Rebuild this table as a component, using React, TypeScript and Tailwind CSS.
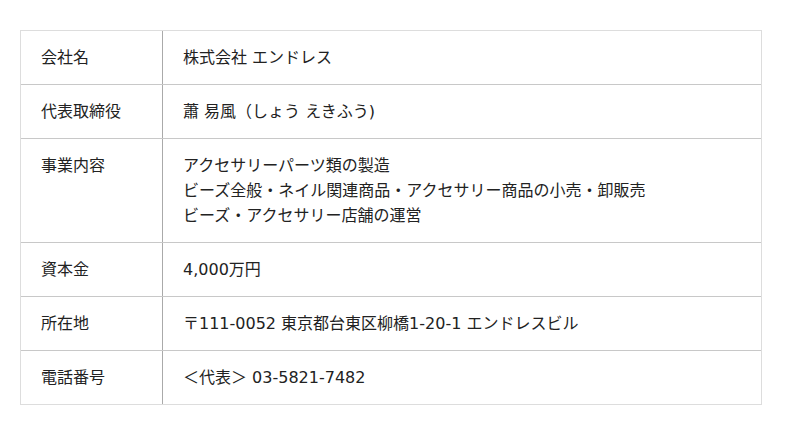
import React from 'react';

const rows: { label: string; lines: string[] }[] = [
  { label: '会社名', lines: ['株式会社 エンドレス'] },
  { label: '代表取締役', lines: ['蕭 易風（しょう えきふう)'] },
  {
    label: '事業内容',
    lines: [
      'アクセサリーパーツ類の製造',
      'ビーズ全般・ネイル関連商品・アクセサリー商品の小売・卸販売',
      'ビーズ・アクセサリー店舗の運営',
    ],
  },
  { label: '資本金', lines: ['4,000万円'] },
  { label: '所在地', lines: ['〒111-0052 東京都台東区柳橋1-20-1 エンドレスビル'] },
  { label: '電話番号', lines: ['＜代表＞ 03-5821-7482'] },
];

const App: React.FC = () => {
  return (
    <div className="w-[800px] h-[435px] bg-white pt-[30px] pl-[20px] font-['DejaVu_Sans','Noto_Sans_CJK_JP',sans-serif] text-[16px] leading-[25px] text-[#222]">
      <div className="w-[742px] border border-[#ddd]">
        {rows.map((row, i) => (
          <div key={i} className={`flex ${i > 0 ? 'border-t border-[#c8c8c8]' : ''}`}>
            <div className="w-[142px] shrink-0 px-[20px] py-[14px] border-r border-[#aaa]">{row.label}</div>
            <div className="flex-1 px-[20px] py-[14px]">
              {row.lines.map((line, j) => (
                <div key={j}>{line}</div>
              ))}
            </div>
          </div>
        ))}
      </div>
    </div>
  );
};

export default App;
